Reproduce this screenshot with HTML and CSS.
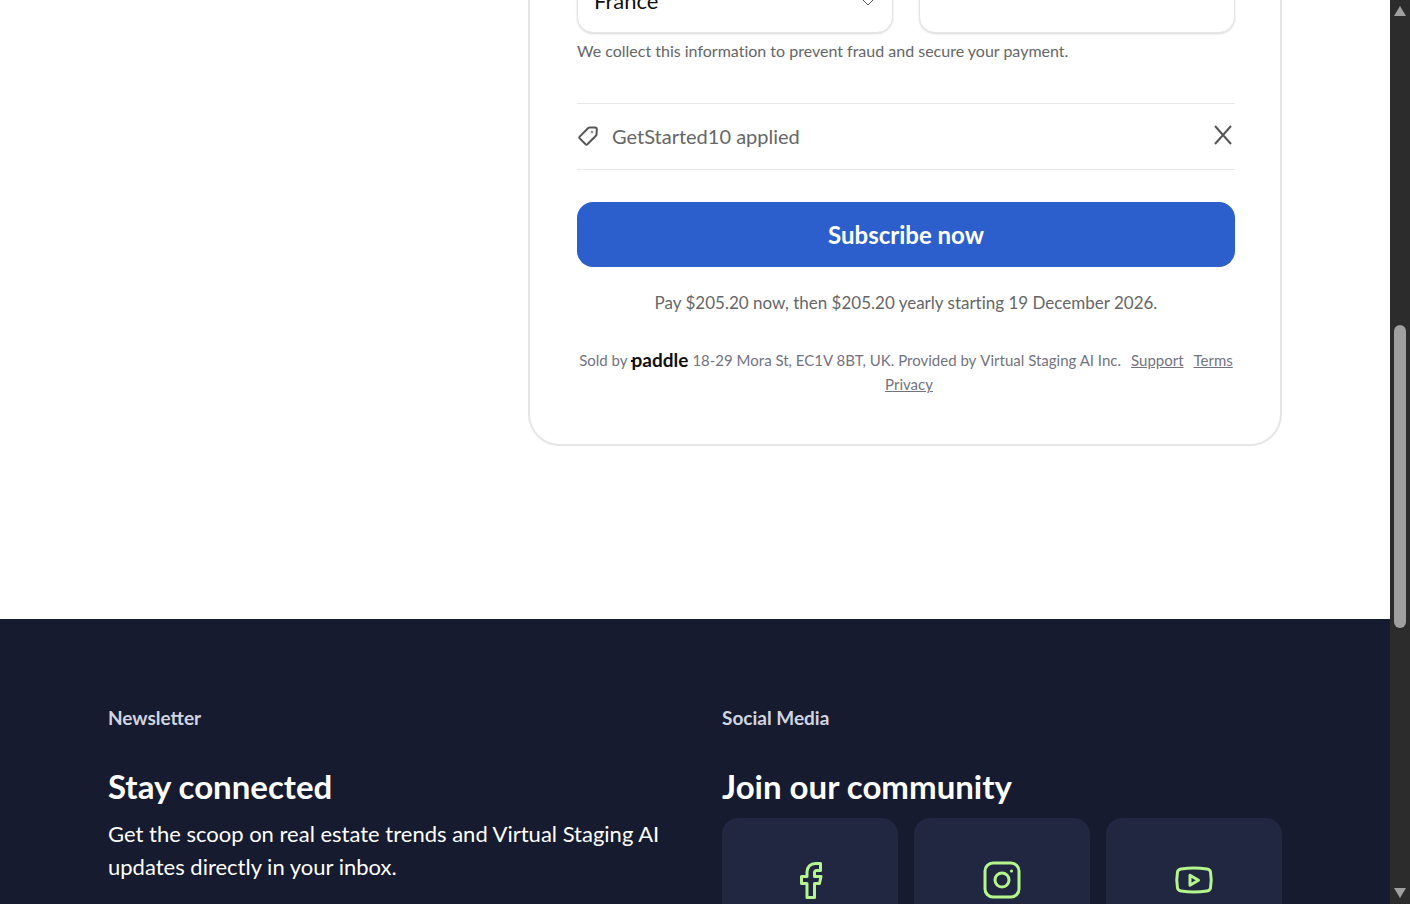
FILE: index.html
```html
<!DOCTYPE html>
<html lang="en">
<head>
    <meta charset="UTF-8">
    <title>Virtual Staging AI - Checkout</title>
    <meta name="viewport" content="width=device-width, initial-scale=1.0">
    <link rel="stylesheet" href="styles.css">
</head>
<body>
    <div class="page">
        <main class="container checkout">
            <form class="card" onsubmit="event.preventDefault();">
                <div class="fields">
                    <div class="field">
                        <select class="control" name="country" aria-label="Country">
                            <option>France</option>
                        </select>
                        <svg class="chevron" viewBox="0 0 12 8" aria-hidden="true"><path d="M1 1l5 5 5-5"/></svg>
                    </div>
                    <div class="field">
                        <input class="control" type="text" name="postcode" aria-label="Postcode">
                    </div>
                </div>
                <p class="note">We collect this information to prevent fraud and secure your payment.</p>
                <div class="discount">
                    <svg class="tag" viewBox="0 0 20 20" aria-hidden="true">
                        <path d="M11.4 1.6L17 1.4Q18.8 1.4 18.8 3.2L18.5 8.4Q18.5 9.2 17.9 9.8L9.4 18.3Q8.5 19.1 7.6 18.3L1.7 12.4Q.8 11.5 1.7 10.6L10 2.3Q10.6 1.6 11.4 1.6Z"/>
                        <circle cx="14" cy="6" r=".3"/>
                    </svg>
                    <span>GetStarted10 applied</span>
                    <button type="button" class="remove" aria-label="Remove discount">
                        <svg viewBox="0 0 18 20" aria-hidden="true"><path d="M1 1l16 18M17 1L1 19"/></svg>
                    </button>
                </div>
                <button type="submit" class="subscribe">Subscribe now</button>
                <p class="terms">Pay $205.20 now, then $205.20 yearly starting 19 December 2026.</p>
                <div class="seller">
                    <span>Sold by</span>
                    <span class="paddle">paddle</span>
                    <span>18-29 Mora St, EC1V 8BT, UK.</span>
                    <span>Provided by</span>
                    <span>Virtual Staging AI Inc.</span>
                    <a href="#">Support</a>
                    <a href="#">Terms</a>
                    <a href="#">Privacy</a>
                </div>
            </form>
        </main>
        <footer class="footer">
            <div class="container columns">
                <section>
                    <h3>Newsletter</h3>
                    <h2>Stay connected</h2>
                    <p>Get the scoop on real estate trends and Virtual Staging AI updates directly in your inbox.</p>
                </section>
                <section>
                    <h3>Social Media</h3>
                    <h2>Join our community</h2>
                    <div class="socials">
                        <a href="#" aria-label="Facebook">
                            <svg viewBox="0 0 40 40"><path d="M30.500 3.500h-5c-5 0-8.500 3.500-8.500 8.500v4.500h-5.500v7h5.500v14h7.500v-14h5l1.500-7h-6.500v-4c0-1 1-2 2-2h4z"/></svg>
                        </a>
                        <a href="#" aria-label="Instagram">
                            <svg viewBox="0 0 40 40"><rect x="3" y="3" width="34" height="34" rx="8"/><circle cx="20" cy="20" r="7"/><circle class="dot" cx="29.500" cy="11" r="1.600"/></svg>
                        </a>
                        <a href="#" aria-label="YouTube">
                            <svg viewBox="0 0 40 40"><path d="M7 9Q20 7 33 9Q36 9.500 36.500 12Q38 20 36.500 28Q36 30.500 33 31Q20 33 7 31Q4 30.500 3.500 28Q2 20 3.500 12Q4 9.500 7 9Z"/><path d="M16 15.200v10l8.500-5z"/></svg>
                        </a>
                    </div>
                </section>
            </div>
        </footer>
    </div>
    <div class="scrollbar" aria-hidden="true">
        <svg viewBox="0 0 20 20"><path d="M10 6L16 16H4Z"/></svg>
        <div class="space-top"></div>
        <div class="thumb"></div>
        <div class="space-bottom"></div>
        <svg viewBox="0 0 20 20"><path d="M10 14L4 4h12Z"/></svg>
    </div>
</body>
</html>
```
FILE: styles.css
```css
* {
    box-sizing: border-box;
}
body {
    display: flex;
    height: 100vh;
    margin: 0;
    overflow: hidden;
    font-family: Lato, sans-serif;
    color: #666;
    background-color: #fff;
}
h2, h3, p {
    margin: 0;
}
.page {
    flex: 1;
    min-width: 0;
    overflow: hidden;
}
.container {
    padding: 0 108px;
}

/* checkout */
.checkout {
    display: grid;
    grid-template-columns: 366px 1fr;
    gap: 54px;
    margin-top: -79px;
    padding-bottom: 173px;
    font-variant-ligatures: none;
}
.card {
    grid-column: 2;
    padding: 46px 45px 48px 47px;
    border: 2px solid #e5e5e5;
    border-radius: 32px;
}
.fields {
    display: grid;
    grid-template-columns: 1fr 1fr;
    gap: 26px;
}
.field {
    position: relative;
}
.control {
    display: block;
    width: 100%;
    height: 64px;
    padding: 0 16px 2px;
    font-family: inherit;
    font-size: 22px;
    color: #111;
    background-color: #fff;
    border: 1px solid #e5e5e5;
    border-radius: 16px;
    box-shadow: 0 1px 2px rgba(0, 0, 0, 0.15);
    appearance: none;
}
.chevron {
    position: absolute;
    right: 19px;
    top: 30px;
    width: 12px;
    height: 8px;
    fill: none;
    stroke: #555;
}
.note {
    margin: 6px 0 40px;
    font-size: 16px;
    line-height: 24px;
}
.discount {
    display: flex;
    align-items: center;
    height: 67px;
    padding-bottom: 1px;
    border-top: 1px solid #e9e9e9;
    border-bottom: 1px solid #e9e9e9;
    font-size: 20px;
}
.tag {
    width: 20px;
    height: 20px;
    margin: 0 14px 0 1px;
    fill: none;
    stroke: #555;
    stroke-width: 2;
}
.remove {
    display: flex;
    margin-left: auto;
    padding: 0 3px 3px;
    background: none;
    border: none;
    cursor: pointer;
}
.remove svg {
    width: 18px;
    height: 20px;
    stroke: #555;
    stroke-width: 2;
}
.subscribe {
    display: block;
    width: 100%;
    margin-top: 32px;
    padding: 16px;
    font-family: inherit;
    font-size: 24px;
    font-weight: 700;
    line-height: 33px;
    color: #fff;
    background-color: #2d5fcc;
    border: none;
    border-radius: 16px;
    cursor: pointer;
}
.terms {
    margin: 24px 0 33px;
    font-size: 17px;
    line-height: 24px;
    text-align: center;
}
.seller {
    display: flex;
    flex-wrap: wrap;
    justify-content: center;
    column-gap: 4px;
    font-size: 15px;
    line-height: 24px;
    color: #737380;
}
.seller a {
    margin-left: 6px;
    color: inherit;
}
.paddle {
    position: relative;
    font-size: 19px;
    font-weight: 700;
    color: #111;
}
/* small tick on the stem of the logo */
.paddle::before {
    content: "";
    position: absolute;
    left: -1px;
    top: 12px;
    width: 4px;
    height: 2px;
    background-color: #111;
}

/* footer */
.footer {
    padding: 85px 0;
    color: #fff;
    background-color: #161b2f;
}
.columns {
    display: grid;
    grid-template-columns: 1fr 1fr;
    gap: 54px;
}
.footer h3 {
    margin-bottom: 34px;
    font-size: 19px;
    line-height: 28px;
    color: #d1d5e0;
}
.footer h2 {
    font-size: 33px;
    line-height: 40px;
}
.footer p {
    margin-top: 11px;
    font-size: 22px;
    line-height: 33px;
}
.socials {
    display: grid;
    grid-template-columns: repeat(3, 1fr);
    gap: 16px;
    margin-top: 12px;
}
.socials a {
    display: flex;
    justify-content: center;
    padding: 42px 0;
    background-color: #222741;
    border-radius: 16px;
}
.socials svg {
    width: 40px;
    height: 40px;
    fill: none;
    stroke: #b5f58e;
    stroke-width: 3;
    stroke-linejoin: round;
}
.socials .dot {
    fill: #b5f58e;
    stroke: none;
}

/* scrollbar */
.scrollbar {
    display: flex;
    flex-direction: column;
    width: 20px;
    background-color: #2c2c2c;
}
.scrollbar svg {
    width: 20px;
    height: 20px;
    fill: #a0a0a0;
}
.space-top {
    flex: 305;
}
.thumb {
    flex: 303;
    margin: 0 4px;
    background-color: #9f9f9f;
    border-radius: 6px;
}
.space-bottom {
    flex: 256;
}
```
